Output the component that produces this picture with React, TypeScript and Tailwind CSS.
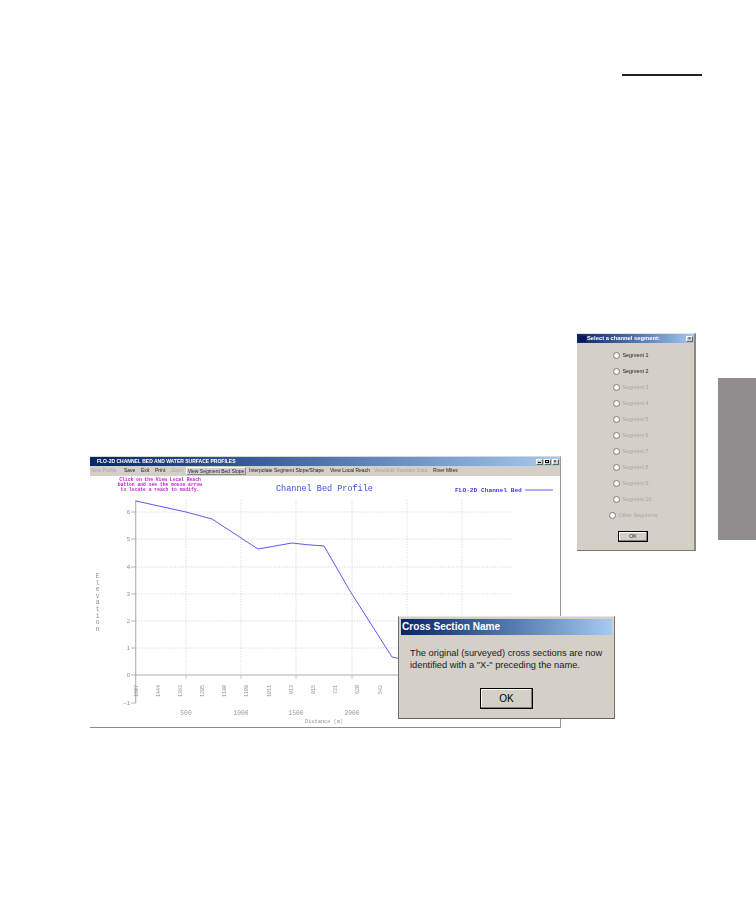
import React from "react";

const sans = "font-['Liberation_Sans',Arial,sans-serif]";
const segs = ["Segment 1","Segment 2","Segment 3","Segment 4","Segment 5","Segment 6","Segment 7","Segment 8","Segment 9","Segment 10"];
const yTicks = [[6,511],[5,538],[4,566],[3,593],[2,620],[1,647],[0,674],[-1,702]];
const xGrid = [186,241,296,352,407,462];
const xLabels: [string,number][] = [["500",186],["1000",241],["1500",296],["2000",352]];
const rot: [string,number][] = [["1607",136],["1444",158],["1363",180],["1285",202],["1180",224],["1108",246],["1011",269],["913",291],["815",313],["721",335],["620",357],["542",380]];
const letters = "Elevation".split("");

function Chart() {
  return (
    <svg viewBox="90 475 470 251" className="block w-[470px] h-[251px] blur-[0.4px]">
      <rect x="90" y="475" width="470" height="251" fill="#fff" />
      {yTicks.filter(t => t[0] > 0).map(t => (
        <line key={t[0]} x1="136" x2="513" y1={t[1]} y2={t[1]} stroke="#cfcfcf" strokeWidth="0.9" strokeDasharray="1 1.6" />
      ))}
      {xGrid.map(x => (
        <line key={x} x1={x} x2={x} y1="499" y2="674" stroke="#cfcfcf" strokeWidth="0.9" strokeDasharray="1 1.6" />
      ))}
      {xGrid.slice(0,4).map(x => (
        <line key={x} x1={x} x2={x} y1="674" y2="678" stroke="#bdbdbd" strokeWidth="0.8" />
      ))}
      <line x1="135.7" x2="135.7" y1="499" y2="702" stroke="#b0b0b0" strokeWidth="1.1" />
      <line x1="135.7" x2="513" y1="674" y2="674" stroke="#b0b0b0" strokeWidth="1.1" />
      {yTicks.map(t => (
        <g key={t[0]}>
          <line x1="131" x2="136" y1={t[1]} y2={t[1]} stroke="#b0b0b0" strokeWidth="0.9" />
          <text x="130" y={t[1] + 2} textAnchor="end" fontSize="6" fontFamily="Liberation Sans" fill="#8f8f8f">{t[0] < 0 ? "−1" : t[0]}</text>
        </g>
      ))}
      <polyline
        fill="none"
        stroke="#5a5cf0"
        strokeWidth="1"
        points="136,500 186,511 212,518 258,548 292,542 307,543.7 324,545 350,590 392,656 399,657.5 420,660"
      />
      {rot.map(([s, x]) => (
        <text key={x} transform={`translate(${x + 2} 684) rotate(-90)`} textAnchor="end" fontSize="5" fontFamily="Liberation Mono" fill="#8f8f8f">{s}</text>
      ))}
      {xLabels.map(([s, x]) => (
        <text key={s} x={x} y="714" textAnchor="middle" fontSize="6.3" fontFamily="Liberation Mono" fill="#9a9a9a">{s}</text>
      ))}
      <text x="305" y="722" fontSize="5.3" fontFamily="Liberation Mono" fill="#8f8f8f">Distance (m)</text>
      {letters.map((c, i) => (
        <text key={i} x="97.7" y={577 + i * 6.6} textAnchor="middle" fontSize="6.4" fontFamily="Liberation Mono" fill="#8f8f8f">{c}</text>
      ))}
      <g fontFamily="Liberation Mono" fontSize="4.7" fill="#c01ed0" textAnchor="middle" fontWeight="bold">
        <text x="160" y="480">Click on the View Local Reach</text>
        <text x="160" y="485">button and see the mouse arrow</text>
        <text x="160" y="490">to locate a reach to modify.</text>
      </g>
      <text x="276" y="490" fontSize="8.5" fontFamily="Liberation Mono" fill="#4a4aea">Channel Bed Profile</text>
      <text x="455" y="491" fontSize="6.2" fontFamily="Liberation Mono" fontWeight="bold" fill="#3a3ae4">FLO-2D Channel Bed</text>
      <line x1="525" x2="553" y1="489" y2="489" stroke="#3a3ae8" strokeWidth="0.8" />
    </svg>
  );
}

function WinBtn({ children }: { children: React.ReactNode }) {
  return (
    <div className="w-[7px] h-[6px] bg-[#d4d0c8] border border-t-white border-l-white border-r-[#666] border-b-[#666] flex items-center justify-center">
      {children}
    </div>
  );
}

function Item({ w, ml, off, children }: { w: string; ml: string; off?: boolean; children: string }) {
  return (
    <span className={`${w} ${ml} shrink-0 whitespace-nowrap ${off ? "text-[#a8a5a0]" : "text-[#222]"}`}>{children}</span>
  );
}

function ChartWindow() {
  return (
    <div className="relative ml-[90px] mt-[123px] w-[471px] h-[272px] shrink-0 bg-white border-t border-t-[#d8d8d8] border-r border-r-[#9a9a9a] border-b-2 border-b-[#8a8a8a]">
      <div className="h-[9px] flex items-center pl-[7px] pr-[1.5px] bg-gradient-to-r from-[#0a246a] to-[#a6caf0] blur-[0.3px]">
        <span className={`${sans} text-[5px] font-bold text-white whitespace-nowrap`}>FLO-2D CHANNEL BED AND WATER SURFACE PROFILES</span>
        <div className="ml-auto flex gap-[1px]">
          <WinBtn><div className="w-[3px] h-[1px] mt-[2px] bg-black" /></WinBtn>
          <WinBtn><div className="w-[4px] h-[3px] border border-black" /></WinBtn>
          <WinBtn><span className={`${sans} text-[5px] leading-none text-black`}>×</span></WinBtn>
        </div>
      </div>
      <div className={`${sans} h-[10px] flex items-center bg-[#d4d0c8] text-[5px] pl-[1px] blur-[0.3px]`}>
        <Item w="w-[28px]" ml="ml-0" off>New Profile</Item>
        <Item w="w-[11px]" ml="ml-[5px]">Save</Item>
        <Item w="w-[9px]" ml="ml-[6px]">Exit</Item>
        <Item w="w-[11px]" ml="ml-[5px]">Print</Item>
        <Item w="w-[12px]" ml="ml-[5px]" off>Zoom</Item>
        <span className="ml-[3px] w-[60px] h-[8px] shrink-0 whitespace-nowrap text-center leading-[6px] text-[#222] bg-[#d4d0c8] border border-t-white border-l-white border-r-[#888] border-b-[#888]">View Segment Bed Slope</span>
        <Item w="w-[76px]" ml="ml-[3px]">Interpolate Segment Slope/Shape</Item>
        <Item w="w-[39px]" ml="ml-[5px]">View Local Reach</Item>
        <Item w="w-[53px]" ml="ml-[5px]" off>View/Edit Xsection Data</Item>
        <Item w="w-[23px]" ml="ml-[6px]">River Miles</Item>
      </div>
      <Chart />
      <div className={`${sans} absolute left-[308px] top-[159px] w-[217px] h-[103px] bg-[#d4d0c8] border border-t-[#e8e6e0] border-l-[#707070] border-r-[#707070] border-b-[#606060] p-[2px] flex flex-col`}>
        <div className="h-[16px] flex items-center pl-[1px] bg-gradient-to-r from-[#0a246a] to-[#a6caf0]">
          <span className="text-[10.1px] font-bold text-white whitespace-nowrap">Cross Section Name</span>
        </div>
        <p className="mt-[12px] ml-[9px] text-[9.3px] leading-[12px] text-[#1a1a1a] whitespace-nowrap">
          The original (surveyed) cross sections are now<br />identified with a "X-" preceding the name.
        </p>
        <button className="mt-[17px] ml-[79px] w-[53px] h-[21px] bg-[#d4d0c8] border border-black text-[10px] text-black shadow-[inset_-1px_-1px_0_#808080,inset_1px_1px_0_#fff]">OK</button>
      </div>
    </div>
  );
}

function Radio({ label, on, wide }: { label: string; on?: boolean; wide?: boolean }) {
  return (
    <div className={`h-[16px] flex items-center gap-[2.5px] ${wide ? "pl-[32px]" : "pl-[36px]"}`}>
      <span className="w-[7px] h-[7px] rounded-full bg-white border border-[#777] shrink-0" />
      <span className={`whitespace-nowrap ${on ? "text-[#222]" : "text-[#aaa79f]"}`}>{label}</span>
    </div>
  );
}

function SegmentDialog() {
  return (
    <div className={`${sans} ml-[16px] w-[119px] h-[218px] shrink-0 flex flex-col bg-[#d4d0c8] border-t border-t-[#e4e2dc] border-r-2 border-r-[#8a8a8a] border-b border-b-[#777] blur-[0.35px] text-[5.4px]`}>
      <div className="h-[9px] shrink-0 flex items-center pl-[2px] pr-[1px] bg-gradient-to-r from-[#0a246a] to-[#a6caf0]">
        <div className="w-[7px] h-[6px] bg-[#101060] shrink-0" />
        <span className="ml-[1px] font-bold text-[5.8px] text-white whitespace-nowrap">Select a channel segment:</span>
        <div className="ml-auto"><WinBtn><span className="text-[5px] leading-none text-black">×</span></WinBtn></div>
      </div>
      <div className="pt-[4px] flex flex-col">
        {segs.map((s, i) => <Radio key={s} label={s} on={i < 2} />)}
        <Radio label="Other Segments" wide />
      </div>
      <button className="mt-[8px] ml-[41px] w-[30px] h-[11px] text-[5.2px] leading-none text-[#222] bg-[#d4d0c8] border border-black shadow-[inset_-1px_-1px_0_#808080,inset_1px_1px_0_#fff]">OK</button>
    </div>
  );
}

export default function App() {
  return (
    <div className="w-[756px] h-[918px] bg-white overflow-hidden flex flex-col">
      <div className="mt-[74px] ml-[622px] w-[80px] h-[2px] bg-[#231f20]" />
      <div className="mt-[257px] flex items-start">
        <ChartWindow />
        <SegmentDialog />
        <div className="ml-[22px] mt-[45px] w-[38px] h-[162px] shrink-0 bg-[#8f8d8d]" />
      </div>
    </div>
  );
}
